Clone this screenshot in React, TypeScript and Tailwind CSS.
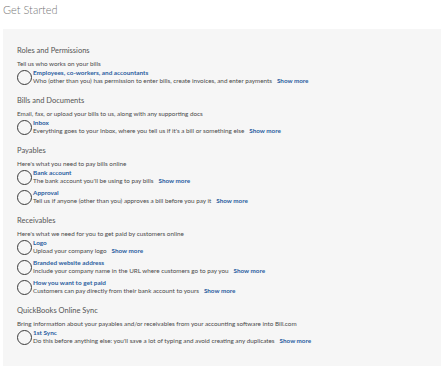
import React from "react";

type Item = { title: string; text: string };
type Section = { heading: string; desc: string; items: Item[] };

const sections: Section[] = [
  {
    heading: "Roles and Permissions",
    desc: "Tell us who works on your bills",
    items: [
      {
        title: "Employees, co-workers, and accountants",
        text: "Who (other than you) has permission to enter bills, create invoices, and enter payments",
      },
    ],
  },
  {
    heading: "Bills and Documents",
    desc: "Email, fax, or upload your bills to us, along with any supporting docs",
    items: [
      {
        title: "Inbox",
        text: "Everything goes to your Inbox, where you tell us if it's a bill or something else",
      },
    ],
  },
  {
    heading: "Payables",
    desc: "Here's what you need to pay bills online",
    items: [
      { title: "Bank account", text: "The bank account you'll be using to pay bills" },
      {
        title: "Approval",
        text: "Tell us if anyone (other than you) approves a bill before you pay it",
      },
    ],
  },
  {
    heading: "Receivables",
    desc: "Here's what we need for you to get paid by customers online",
    items: [
      { title: "Logo", text: "Upload your company logo" },
      {
        title: "Branded website address",
        text: "Include your company name in the URL where customers go to pay you",
      },
      {
        title: "How you want to get paid",
        text: "Customers can pay directly from their bank account to yours",
      },
    ],
  },
  {
    heading: "QuickBooks Online Sync",
    desc: "Bring information about your payables and/or receivables from your accounting software into Bill.com",
    items: [
      {
        title: "1st Sync",
        text: "Do this before anything else: you'll save a lot of typing and avoid creating any duplicates",
      },
    ],
  },
];

const Step = ({ item }: { item: Item }) => (
  <div className="flex items-center">
    <div className="w-[15px] h-[15px] rounded-full border border-[#3a3a3a] shrink-0 bg-transparent" />
    <div className="ml-[1px] flex flex-col">
      <a className="text-[6.4px] leading-[8px] font-bold text-[#2a5d9f] whitespace-nowrap">
        {item.title}
      </a>
      <p className="text-[6.3px] leading-[8px] text-[#4a4a4a] whitespace-nowrap">
        {item.text}
        <span className="ml-[5px] font-bold text-[#2a5d9f]">Show more</span>
      </p>
    </div>
  </div>
);

const App = () => {
  return (
    <div className="w-[445px] h-[369px] bg-white font-['Lato',sans-serif] overflow-hidden">
      <h1 className="pt-[3px] pl-[3px] text-[11px] leading-[14px] font-light text-[#777]">
        Get Started
      </h1>
      <div className="mt-[12px] ml-[3px] mr-[4px] h-[337px] bg-[#f6f6f6] pt-[17px] pl-[14px]">
        <div className="flex flex-col gap-[11px]">
          {sections.map((s) => (
            <div key={s.heading}>
              <h2 className="text-[7.5px] leading-[10px] text-[#555]">{s.heading}</h2>
              <p className="mt-[2.5px] text-[6.3px] leading-[9px] text-[#4a4a4a]">{s.desc}</p>
              <div className="mt-[1.5px] flex flex-col gap-[4px]">
                {s.items.map((it) => (
                  <Step key={it.title} item={it} />
                ))}
              </div>
            </div>
          ))}
        </div>
      </div>
    </div>
  );
};

export default App;
